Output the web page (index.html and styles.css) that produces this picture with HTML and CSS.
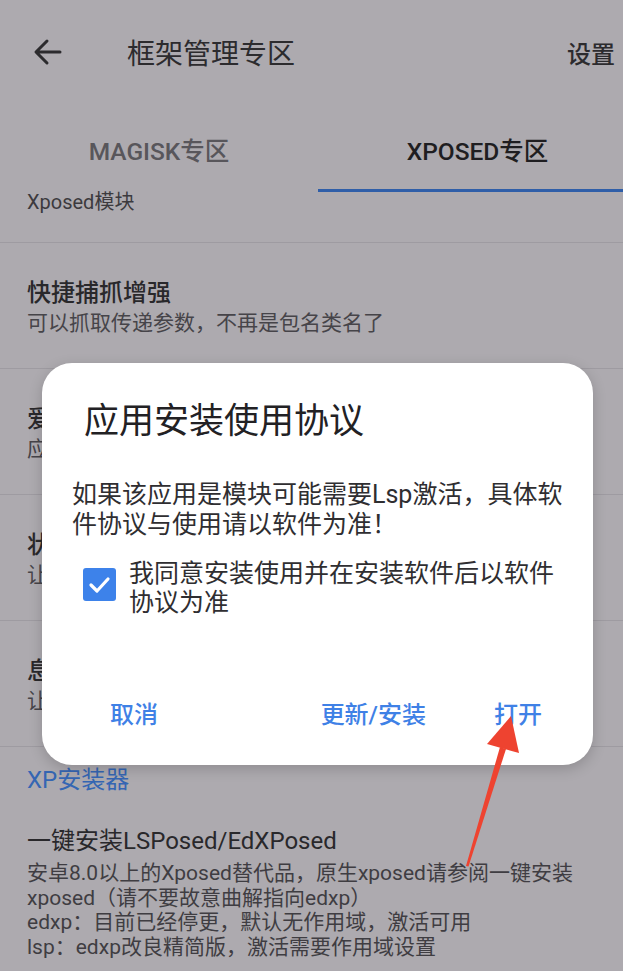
FILE: index.html
```html
<!DOCTYPE html>
<html lang="zh-CN">
<head>
<meta charset="utf-8">
<title>框架管理专区</title>
<link rel="stylesheet" href="styles.css">
</head>
<body>
<div class="screen">
  <header class="appbar">
    <svg class="back" width="30" height="30" viewBox="0 0 30 30"><path d="M27 15H4M14 4L3 15l11 11" fill="none" stroke="#2c2b2e" stroke-width="3" stroke-linecap="round" stroke-linejoin="round"/></svg>
    <span class="title">框架管理专区</span>
    <span class="action">设置</span>
  </header>
  <nav class="tabs">
    <div class="tab">MAGISK专区</div>
    <div class="tab active">XPOSED专区</div>
  </nav>
  <main class="list">
    <div class="cat cat-top">Xposed模块</div>
    <div class="row">
      <div class="row-title">快捷捕抓增强</div>
      <div class="row-sub">可以抓取传递参数，不再是包名类名了</div>
    </div>
    <div class="row">
      <div class="row-title">爱玩机模块增强</div>
      <div class="row-sub">应用功能增强与优化</div>
    </div>
    <div class="row">
      <div class="row-title">状态栏歌词</div>
      <div class="row-sub">让状态栏显示歌词</div>
    </div>
    <div class="row">
      <div class="row-title">息屏显示增强</div>
      <div class="row-sub">让息屏显示更多内容</div>
    </div>
    <div class="cat cat-blue">XP安装器</div>
    <div class="item">
      <div class="row-title">一键安装LSPosed/EdXPosed</div>
      <div class="item-sub">安卓8.0以上的Xposed替代品，原生xposed请参阅一键安装<br>xposed（请不要故意曲解指向edxp）<br>edxp：目前已经停更，默认无作用域，激活可用<br>lsp：edxp改良精简版，激活需要作用域设置</div>
    </div>
  </main>

  <div class="dialog">
    <div class="dlg-title">应用安装使用协议</div>
    <div class="dlg-body">如果该应用是模块可能需要Lsp激活，具体软件协议与使用请以软件为准！</div>
    <div class="dlg-check">
      <span class="box"><svg width="33" height="33" viewBox="0 0 33 33"><rect width="33" height="33" rx="3" fill="#3d82ea"/><path d="M8 17l6 6 11-12" fill="none" stroke="#fff" stroke-width="3.2" stroke-linecap="round" stroke-linejoin="round"/></svg></span>
      <span class="check-text">我同意安装使用并在安装软件后以软件协议为准</span>
    </div>
    <div class="dlg-actions">
      <span class="btn">取消</span>
      <span class="btn btn-right">更新/安装</span>
      <span class="btn">打开</span>
    </div>
  </div>

  <svg class="arrow" width="623" height="971" viewBox="0 0 623 971">
    <polygon points="466,866 468.5,866.6 506,749 500,747" fill="#ee4330"/>
    <polygon points="511,716 487,744 519,753" fill="#ee4330"/>
  </svg>
</div>
</body>
</html>
```

FILE: styles.css
```css
html, body {
  margin: 0;
  padding: 0;
}
body {
  width: 623px;
  height: 971px;
  overflow: hidden;
  background: #adaaaf;
  font-family: Roboto, "Noto Sans CJK SC", sans-serif;
  color: #2c2b2e;
}
.screen {
  position: relative;
  width: 623px;
  height: 971px;
}
.appbar {
  height: 104px;
  display: flex;
  align-items: center;
  padding: 0 8px 0 33px;
  box-sizing: border-box;
}
.back {
  flex: none;
}
.title {
  margin-left: 64px;
  font-size: 28px;
  color: #2c2b2e;
}
.action {
  margin-left: auto;
  font-size: 24px;
  font-weight: 500;
  color: #2c2b2e;
}
.tabs {
  height: 88px;
  display: grid;
  grid-template-columns: 318px 305px;
}
.tab {
  text-align: center;
  font-size: 24.5px;
  font-weight: 500;
  line-height: 30px;
  padding-top: 33px;
  color: #58565b;
  box-sizing: border-box;
}
.tab.active {
  color: #1f1e21;
  border-bottom: 3px solid #2f5ea8;
  padding-left: 14px;
}
.cat {
  padding-left: 27px;
}
.cat-top {
  height: 51px;
  box-sizing: border-box;
  font-size: 20px;
  line-height: 20px;
  color: #3c3a3e;
  border-bottom: 1px solid #9e9ba1;
}
.row {
  padding: 35px 27px 30px;
  border-bottom: 1px solid #9e9ba1;
}
.row-title {
  font-size: 24px;
  line-height: 30px;
  font-weight: 500;
  color: #29282b;
}
.row-sub {
  font-size: 21px;
  line-height: 30px;
  color: #464449;
}
.cat-blue {
  padding-top: 19px;
  font-size: 24px;
  line-height: 28px;
  color: #3566b3;
}
.item {
  padding: 32px 27px 0;
}
.item .row-title {
  font-weight: 400;
}
.item-sub {
  margin-top: 5px;
  font-size: 21px;
  line-height: 24.7px;
  color: #3f3d42;
  white-space: nowrap;
}
.dialog {
  position: absolute;
  left: 42px;
  top: 363px;
  width: 551px;
  height: 402px;
  box-sizing: border-box;
  background: #fff;
  border-radius: 30px;
  box-shadow: 0 4px 14px rgba(0, 0, 0, 0.18);
  padding: 39px 21px 0 30px;
}
.dlg-title {
  margin-left: 12px;
  font-size: 35px;
  line-height: 40px;
  color: #222124;
}
.dlg-body {
  margin-top: 38px;
  width: 500px;
  font-size: 25px;
  line-height: 30px;
  color: #2f2e31;
}
.dlg-check {
  margin-top: 19px;
  display: flex;
  align-items: flex-start;
}
.box {
  flex: none;
  margin: 9px 0 0 11px;
  height: 33px;
}
.check-text {
  margin-left: 13px;
  width: 443px;
  font-size: 25px;
  line-height: 29px;
  color: #2f2e31;
}
.dlg-actions {
  margin-top: 83px;
  display: flex;
  align-items: center;
  padding: 0 30px 0 38px;
  gap: 68px;
}
.btn {
  font-size: 24px;
  line-height: 30px;
  font-weight: 500;
  color: #3f81e6;
}
.btn-right {
  margin-left: auto;
}
.arrow {
  position: absolute;
  left: 0;
  top: 0;
  pointer-events: none;
}
```
